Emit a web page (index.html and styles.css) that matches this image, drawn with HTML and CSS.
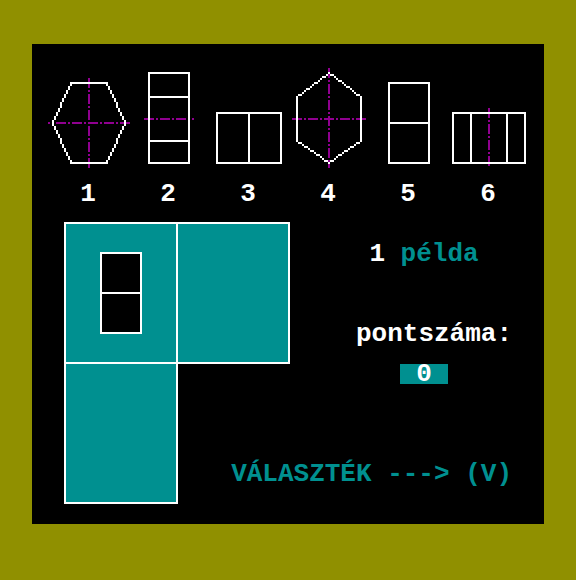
FILE: index.html
```html
<!DOCTYPE html>
<html lang="hu">
<head>
<meta charset="utf-8">
<title>Példa</title>
<link rel="stylesheet" href="styles.css">
</head>
<body>
<main class="screen">
  <ol class="shapes">
    <li class="shape">
      <svg class="figure" viewBox="0 0 40 52" aria-hidden="true">
        <path class="axis" d="M20.5 6V51"/>
        <path class="axis axis-late" d="M0 28.5H41"/>
        <path class="line" d="M11 8.5h19M11 48.5h19
          M2.5 27v3M3.5 25v2M4.5 23v2M5.5 21v2M6.5 18v3M7.5 16v2M8.5 14v2M9.5 12v2M10.5 10v2M11.5 8v2
          M3.5 30v2M4.5 32v2M5.5 34v2M6.5 36v3M7.5 39v2M8.5 41v2M9.5 43v2M10.5 45v2M11.5 47v2
          M38.5 27v3M37.5 25v2M36.5 23v2M35.5 21v2M34.5 18v3M33.5 16v2M32.5 14v2M31.5 12v2M30.5 10v2M29.5 8v2
          M37.5 30v2M36.5 32v2M35.5 34v2M34.5 36v3M33.5 39v2M32.5 41v2M31.5 43v2M30.5 45v2M29.5 47v2"/>
      </svg>
      <span class="label">1</span>
    </li>
    <li class="shape">
      <svg class="figure" viewBox="0 0 40 52" aria-hidden="true">
        <path class="axis" d="M8 26.5H33"/>
        <path class="line" d="M10.5 3.5h20v45h-20zM10.5 15.5h20M10.5 37.5h20"/>
      </svg>
      <span class="label">2</span>
    </li>
    <li class="shape">
      <svg class="figure" viewBox="0 0 40 52" aria-hidden="true">
        <path class="line" d="M4.5 23.5h32v25h-32zM20.5 23.5v25"/>
      </svg>
      <span class="label">3</span>
    </li>
    <li class="shape">
      <svg class="figure" viewBox="0 0 40 52" aria-hidden="true">
        <path class="axis" d="M20.5 1V51"/>
        <path class="axis" d="M2 26.5H39"/>
        <path class="line" d="M4.5 15v23M36.5 15v23
          M20 3.5h1M19 4.5h1M17 5.5h2M16 6.5h1M15 7.5h1M13 8.5h2M12 9.5h1M11 10.5h1M9 11.5h2M8 12.5h1M7 13.5h1M5 14.5h2
          M21 4.5h2M23 5.5h1M24 6.5h1M25 7.5h2M27 8.5h1M28 9.5h1M29 10.5h2M31 11.5h1M32 12.5h1M33 13.5h1M34 14.5h2
          M5 38.5h2M7 39.5h1M8 40.5h2M10 41.5h1M11 42.5h2M13 43.5h1M14 44.5h2M16 45.5h1M17 46.5h1M18 47.5h2M20 48.5h1
          M34 38.5h2M33 39.5h1M31 40.5h2M30 41.5h1M28 42.5h2M27 43.5h1M25 44.5h2M24 45.5h1M23 46.5h1M21 47.5h2"/>
      </svg>
      <span class="label">4</span>
    </li>
    <li class="shape">
      <svg class="figure" viewBox="0 0 40 52" aria-hidden="true">
        <path class="line" d="M10.5 8.5h20v40h-20zM10.5 28.5h20"/>
      </svg>
      <span class="label">5</span>
    </li>
    <li class="shape">
      <svg class="figure" viewBox="0 0 40 52" aria-hidden="true">
        <path class="axis" d="M20.5 21V51"/>
        <path class="line" d="M2.5 23.5h36v25h-36zM11.5 23.5v25M29.5 23.5v25"/>
      </svg>
      <span class="label">6</span>
    </li>
  </ol>

  <section class="task">
    <div class="cell cell-first">
      <svg class="view" viewBox="0 0 21 41" aria-hidden="true">
        <path class="line" d="M.5 .5h20v40h-20zM.5 20.5h20"/>
      </svg>
    </div>
    <div class="cell cell-right"></div>
    <div class="cell cell-below"></div>
    <div class="status">
      <p class="example"><span class="number">1</span> példa</p>
      <p class="score-title">pontszáma:</p>
      <output class="score">0</output>
    </div>
    <p class="prompt">VÁLASZTÉK ---&gt; (V)</p>
  </section>
</main>
</body>
</html>
```
FILE: styles.css
```css
:root {
  --olive: #909000;
  --teal: #009090;
  --purple: #900090;
}

* {
  box-sizing: border-box;
}

body {
  margin: 0;
  padding: 44px 32px 56px;
  background: var(--olive);
  color: #fff;
  font: bold 26px/20px "Liberation Mono", monospace;
}

p {
  margin: 0;
  white-space: nowrap;
}

.screen {
  padding: 22px 16px 20px;
  background: #000;
}

.shapes {
  display: grid;
  grid-template-columns: repeat(6, 1fr);
  margin: 0;
  padding: 0;
  list-style: none;
}

.shape {
  display: flex;
  flex-direction: column;
  align-items: center;
  gap: 14px;
}

.figure {
  width: 80px;
  height: 104px;
  overflow: visible;
}

.line,
.axis {
  fill: none;
  stroke: #fff;
  stroke-width: 1;
  shape-rendering: crispEdges;
}

.line {
  stroke-linejoin: miter;
}

.axis {
  stroke: var(--purple);
  stroke-dasharray: 5 1 1 1;
}

.axis-late {
  stroke-dashoffset: 4;
}

.task {
  display: grid;
  grid-template-columns: 114px 112px 1fr;
  grid-template-rows: 142px 140px;
  margin: 18px 16px 0;
}

.cell {
  border: 2px solid #fff;
  background: var(--teal);
}

.cell-first {
  display: flex;
  align-items: center;
  justify-content: center;
}

.cell-right {
  border-left: 0;
}

.cell-below {
  grid-area: 2 / 1;
  border-top: 0;
}

.view {
  width: 42px;
  height: 82px;
  background: #000;
}

.status {
  grid-area: 1 / 3 / 3 / 4;
  display: flex;
  flex-direction: column;
  align-items: center;
  padding: 22px 0 0 46px;
}

.example {
  color: var(--teal);
}

.number {
  color: #fff;
}

.score-title {
  align-self: flex-end;
  margin: 60px 0 20px;
}

.score {
  width: 48px;
  background: var(--teal);
  text-align: center;
}

.prompt {
  grid-area: 2 / 2 / 3 / 4;
  place-self: end;
  margin-bottom: 20px;
  color: var(--teal);
}
```
